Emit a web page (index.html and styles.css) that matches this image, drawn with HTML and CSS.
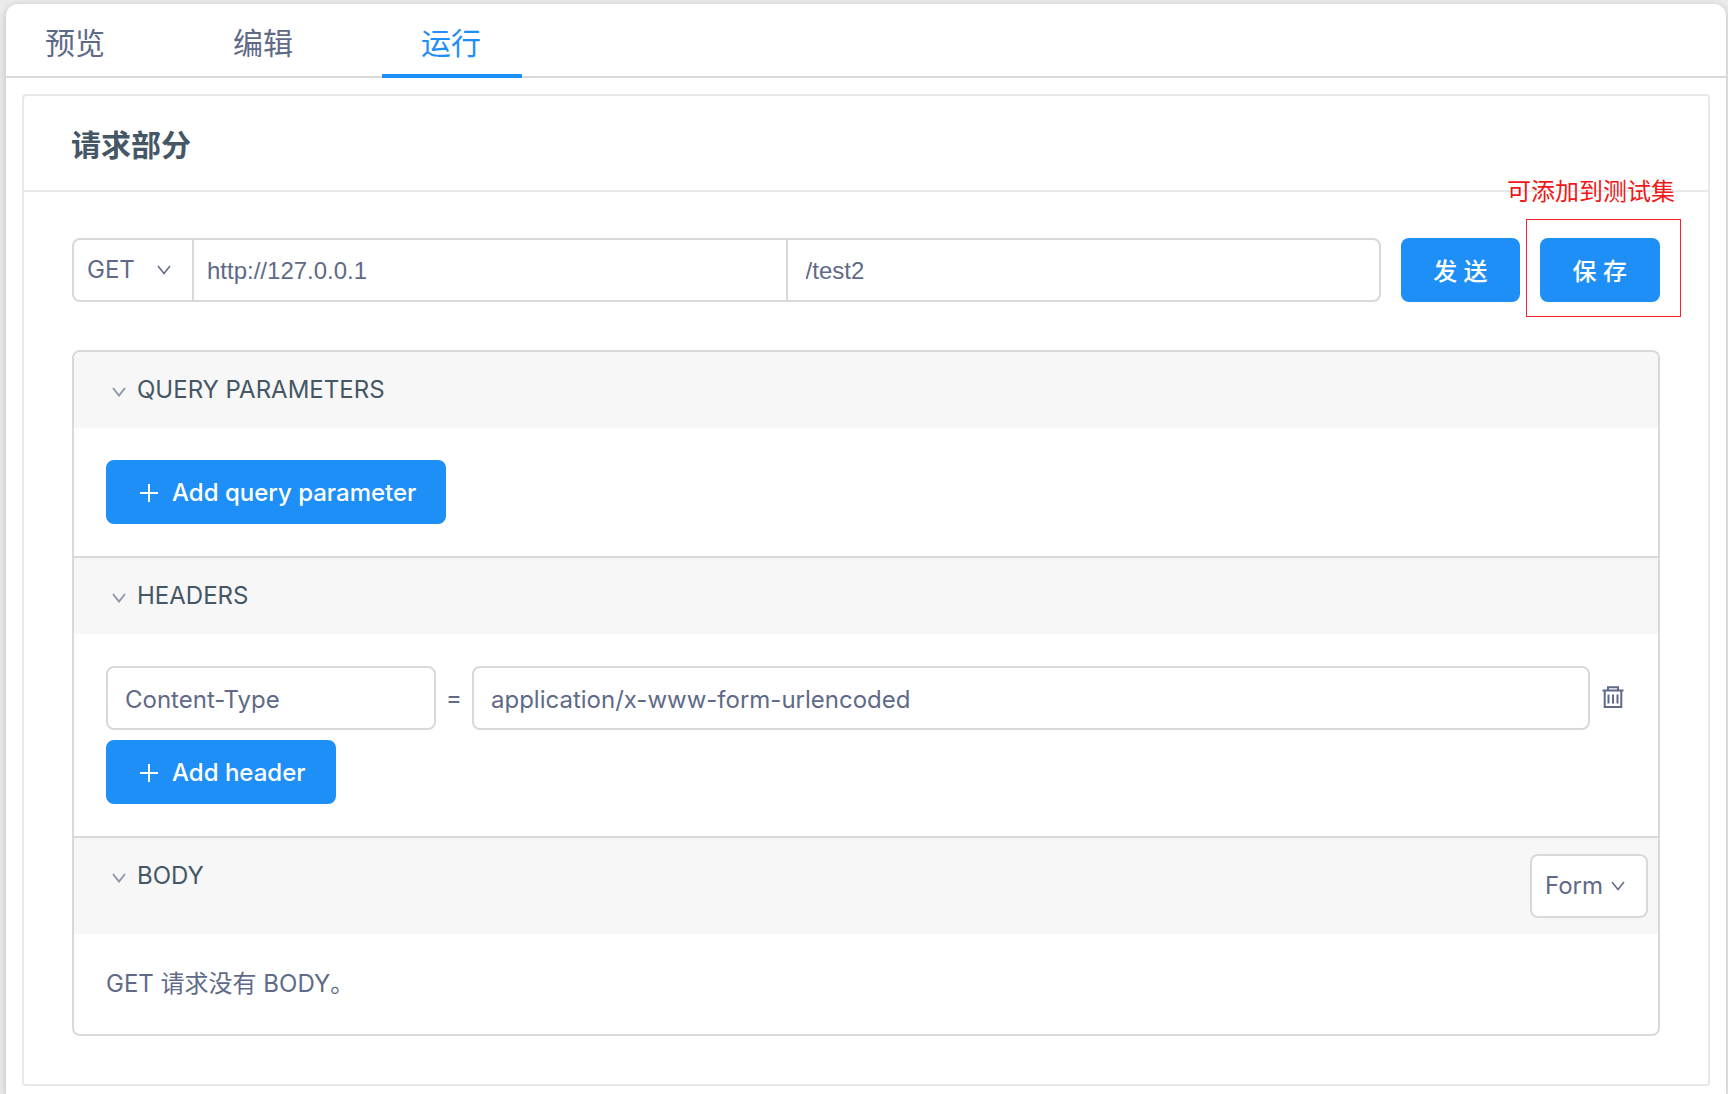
FILE: index.html
```html
<!DOCTYPE html>
<html lang="zh-CN">
<head>
<meta charset="utf-8">
<title>运行</title>
<link rel="stylesheet" href="styles.css">
</head>
<body>
<svg class="sprite" aria-hidden="true">
  <symbol id="down" viewBox="0 0 14 10"><path d="M1 1l6 7.500 6-7.500"/></symbol>
  <symbol id="plus" viewBox="0 0 18 18"><path d="M9 0v18M0 9h18"/></symbol>
  <symbol id="trash" viewBox="0 0 22 22"><path d="M.5 4.500h21M6 4.500V1.200h10v3.300M2.700 4.500V21h16.600V4.500M6.500 8.500v9M11 8.500v9M15.500 8.500v9"/></symbol>
</svg>
<main class="card">
  <nav class="tabs">
    <a class="tab" href="#preview">预览</a>
    <a class="tab" href="#edit">编辑</a>
    <a class="tab tab-active" href="#run" aria-current="page">运行</a>
  </nav>
  <section class="panel">
    <h2 class="panel-title">请求部分</h2>
    <div class="panel-body">
      <form class="request">
        <div class="url-group">
          <div class="picker method">
            <select class="picker-select" aria-label="Method"><option>GET</option><option>POST</option></select>
            <svg class="chevron"><use href="#down"/></svg>
          </div>
          <input class="url-input host" type="text" aria-label="Host" value="http://127.0.0.1">
          <input class="url-input path" type="text" aria-label="Path" value="/test2">
        </div>
        <button class="button" type="button">发 送</button>
        <div class="save">
          <button class="button button-save" type="button">保 存</button>
          <span class="note-box"></span>
          <span class="note-text">可添加到测试集</span>
        </div>
      </form>

      <div class="collapse">
        <section class="group">
          <header class="group-head">
            <h3 class="group-title"><svg class="chevron"><use href="#down"/></svg>QUERY PARAMETERS</h3>
          </header>
          <div class="group-body">
            <button class="button button-add" type="button"><svg class="plus"><use href="#plus"/></svg>Add query parameter</button>
          </div>
        </section>
        <section class="group">
          <header class="group-head">
            <h3 class="group-title"><svg class="chevron"><use href="#down"/></svg>HEADERS</h3>
          </header>
          <div class="group-body">
            <div class="pair">
              <input class="field field-name" type="text" aria-label="Header name" value="Content-Type">
              <span class="equals">=</span>
              <input class="field field-value" type="text" aria-label="Header value" value="application/x-www-form-urlencoded">
              <button class="remove" type="button" aria-label="Delete"><svg class="trash"><use href="#trash"/></svg></button>
            </div>
            <button class="button button-add" type="button"><svg class="plus"><use href="#plus"/></svg>Add header</button>
          </div>
        </section>
        <section class="group">
          <header class="group-head">
            <h3 class="group-title"><svg class="chevron"><use href="#down"/></svg>BODY</h3>
            <div class="picker body-type">
              <select class="picker-select" aria-label="Body type"><option>Form</option><option>JSON</option></select>
              <svg class="chevron"><use href="#down"/></svg>
            </div>
          </header>
          <div class="group-body">
            <p class="empty">GET 请求没有 BODY。</p>
          </div>
        </section>
      </div>
    </div>
  </section>
</main>
</body>
</html>
```
FILE: styles.css
```css
*, *::before, *::after { box-sizing: border-box; }

body {
  display: flex;
  flex-direction: column;
  min-height: 100vh;
  margin: 0;
  padding: 4px 2px 0 6px;
  background: #ebebeb;
  color: #5f6a88;
  font: 24px/36px Inter, "Noto Sans CJK SC", sans-serif;
}

h2, h3, p { margin: 0; }
input, select, button { margin: 0; color: inherit; font: inherit; }
svg { display: block; flex: none; fill: none; stroke: currentColor; }
.sprite { position: absolute; width: 0; height: 0; }

.card {
  flex: 1;
  padding-bottom: 8px;
  border-radius: 12px 12px 0 0;
  background: #fff;
  box-shadow: 0 2px 8px rgba(0, 0, 0, .2);
}

.tabs {
  display: flex;
  gap: 48px;
  border-bottom: 2px solid #d9d9d9;
}
.tab {
  margin-bottom: -2px;
  padding: 19px 41px 11px 39px;
  border-bottom: 4px solid transparent;
  color: inherit;
  font-size: 30px;
  line-height: 40px;
  text-decoration: none;
}
.tab-active { border-color: #1e8ff7; color: #1e8ff7; }

.panel {
  margin: 16px 16px 0;
  border: 2px solid #e8e8e8;
  border-radius: 4px;
}
.panel-title {
  padding: 25px 48px 21px 47px;
  border-bottom: 2px solid #e8e8e8;
  color: #455765;
  font-size: 30px;
  font-weight: 600;
  line-height: 48px;
}
.panel-body { padding: 46px 48px 48px; }

.request { display: flex; gap: 20px; }
.url-group {
  display: flex;
  flex: 1;
  height: 64px;
  border: 2px solid #d9d9d9;
  border-radius: 8px;
}
.picker { position: relative; }
.picker-select {
  width: 100%;
  height: 100%;
  padding: 0 0 0 13px;
  border: 0;
  border-radius: 8px;
  background: none;
  appearance: none;
}
.chevron { width: 14px; height: 10px; stroke-width: 2; }
.picker .chevron {
  position: absolute;
  top: 25px;
  right: 21px;
  stroke-width: 1.5;
  pointer-events: none;
}
.method { flex: none; width: 118px; }
.url-input {
  flex: 1;
  min-width: 0;
  border: 0;
  border-left: 2px solid #d9d9d9;
  background: none;
  font-family: "Liberation Sans", sans-serif;
}
.host { padding: 2px 23px 0 13px; }
.path { padding: 2px 18px 0; }

.button {
  height: 64px;
  padding: 3px 32px 0;
  border: 0;
  border-radius: 8px;
  background: #1e8ff7;
  color: #fff;
  font-weight: 500;
}
.button-save { padding: 3px 33px 0; }
.save { position: relative; }
.note-box {
  position: absolute;
  inset: -19px -21px -15px -14px;
  border: 1px solid #f5222d;
  pointer-events: none;
}
.note-text {
  position: absolute;
  top: -64px;
  right: -15px;
  color: #f01818;
  white-space: nowrap;
}

.collapse {
  margin-top: 48px;
  border: 2px solid #d9d9d9;
  border-radius: 8px;
  overflow: hidden;
}
.group + .group { border-top: 2px solid #d9d9d9; }
.group-head {
  display: flex;
  justify-content: space-between;
  padding-left: 38px;
  background: #f7f7f7;
}
.group-title {
  display: flex;
  align-items: center;
  gap: 11px;
  height: 76px;
  color: #455765;
  font-size: 24px;
  font-weight: 400;
}
.group-title .chevron { margin-top: 4px; color: #8f98ab; }
.group-body { padding: 32px; }

.button-add {
  display: flex;
  align-items: center;
  gap: 14px;
  padding: 2px 30px 0 34px;
}
.plus { width: 18px; height: 18px; stroke-width: 2; }

.pair {
  display: flex;
  align-items: center;
  margin-bottom: 10px;
}
.field {
  height: 64px;
  min-width: 0;
  padding: 2px 18px 0 17px;
  border: 2px solid #d9d9d9;
  border-radius: 8px;
  background: #fff;
}
.field-name { flex: 0 0 330px; }
.field-value { flex: 1; }
.equals { width: 36px; text-align: center; }
.remove { padding: 0 2px 2px 12px; border: 0; background: none; }
.trash { width: 22px; height: 22px; stroke-width: 2; }

.body-type {
  width: 118px;
  height: 64px;
  margin: 16px 10px;
  border: 2px solid #d9d9d9;
  border-radius: 8px;
  background: #fff;
}
.empty { line-height: 36px; }
```
